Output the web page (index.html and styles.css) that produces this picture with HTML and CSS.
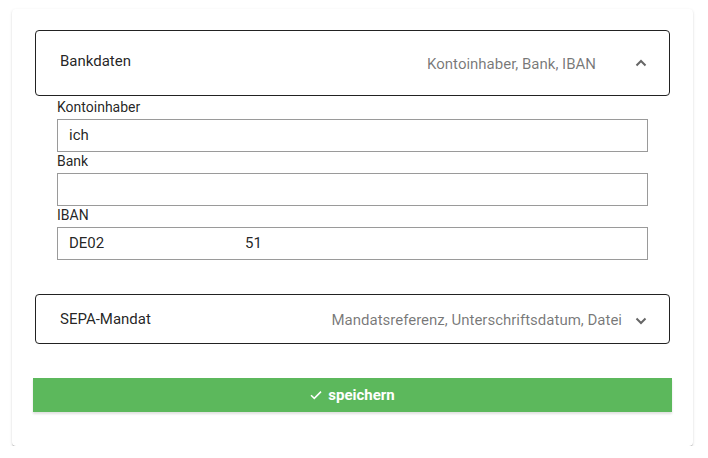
FILE: index.html
```html
<!DOCTYPE html>
<html lang="de">
<head>
<meta charset="utf-8">
<title>Bankdaten</title>
<link rel="stylesheet" href="styles.css">
</head>
<body>
<div class="card">
  <div class="panel">
    <div class="panel-header panel-header--expanded">
      <span class="panel-title">Bankdaten</span>
      <span class="panel-desc panel-desc--wide">Kontoinhaber, Bank, IBAN</span>
      <svg class="chevron" width="12" height="8" viewBox="0 0 12 8"><polyline points="1.5,6.5 6,2 10.5,6.5" fill="none" stroke="#666" stroke-width="2"/></svg>
    </div>
    <div class="panel-body">
      <div class="field">
        <label class="field-label">Kontoinhaber</label>
        <div class="field-input">ich</div>
      </div>
      <div class="field">
        <label class="field-label">Bank</label>
        <div class="field-input"></div>
      </div>
      <div class="field">
        <label class="field-label">IBAN</label>
        <div class="field-input"><span class="iban-a">DE02</span><span>51</span></div>
      </div>
    </div>
  </div>
  <div class="panel">
    <div class="panel-header">
      <span class="panel-title">SEPA-Mandat</span>
      <span class="panel-desc">Mandatsreferenz, Unterschriftsdatum, Datei</span>
      <svg class="chevron chevron--down" width="12" height="8" viewBox="0 0 12 8"><polyline points="1.5,1.5 6,6 10.5,1.5" fill="none" stroke="#666" stroke-width="2"/></svg>
    </div>
  </div>
  <button class="save-btn" type="button"><svg class="check" width="12" height="10" viewBox="0 0 12 10"><polyline points="1,5.2 4.3,8.4 11,1.6" fill="none" stroke="#fff" stroke-width="1.5"/></svg>speichern</button>
</div>
</body>
</html>
```

FILE: styles.css
```css
* { box-sizing: border-box; }
html, body { margin: 0; padding: 0; background: #fff; }
body {
  font-family: Roboto, "Noto Sans", Arial, sans-serif;
  color: rgba(0,0,0,.87);
  padding: 9px 15px 0 12px;
}
.card {
  background: #fff;
  border-radius: 4px;
  box-shadow: 0 2px 1px -1px rgba(0,0,0,.2), 0 1px 1px 0 rgba(0,0,0,.14), 0 1px 3px 0 rgba(0,0,0,.12);
  padding: 21px 21px 35px 21px;
  width: 681px;
  height: 437px;
}
.panel { margin: 0 2px; }
.panel-header {
  display: flex;
  align-items: center;
  height: 50px;
  border: 1px solid #222;
  border-radius: 4px;
  padding: 0 22px 0 24px;
  font-size: 15px;
}
.panel-header--expanded { height: 66px; }
.panel-title { flex: 1; }
.panel-header--expanded .panel-title { margin-top: -5px; }
.panel-desc {
  color: rgba(0,0,0,.54);
  margin-right: 13px;
  padding-top: 2px;
}
.panel-desc--wide { margin-right: 39px; }
.chevron { display: block; }
.chevron--down { margin-top: 3px; }
.panel-body {
  padding: 2px 22px 34px 22px;
}
.field-label {
  display: block;
  font-size: 14px;
  line-height: 19px;
  height: 21px;
  color: rgba(0,0,0,.87);
}
.field-input {
  height: 33px;
  border: 1px solid #9a9a9a;
  padding: 0 11px;
  font-size: 15px;
  line-height: 31px;
  color: rgba(0,0,0,.87);
}
.iban-a { display: inline-block; width: 176px; }
.save-btn {
  display: flex;
  align-items: center;
  justify-content: center;
  width: 100%;
  height: 34px;
  margin-top: 34px;
  border: none;
  border-radius: 0;
  background: #5cb85c;
  color: #fff;
  font-family: Roboto, "Noto Sans", Arial, sans-serif;
  font-weight: 700;
  font-size: 15px;
  box-shadow: 0 2px 2px rgba(0,0,0,.12);
  padding: 0;
}
.check { margin-right: 6px; }
```
